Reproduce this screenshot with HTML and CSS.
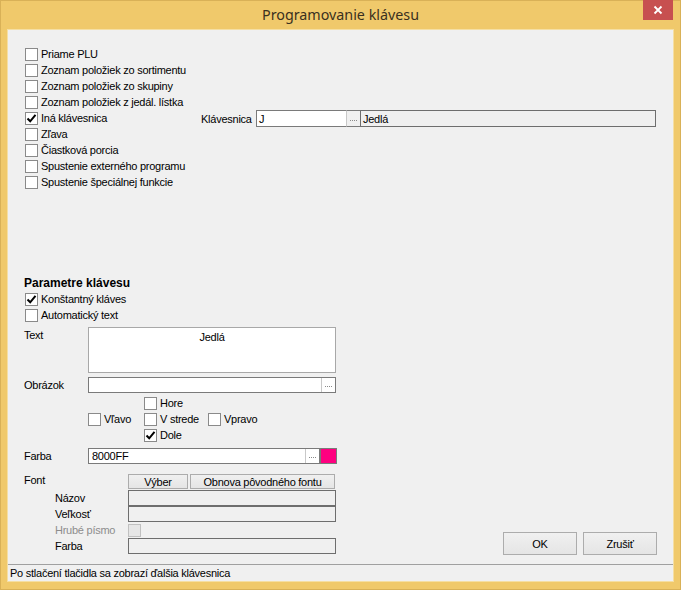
FILE: index.html
```html
<!DOCTYPE html>
<html lang="sk">
<head>
<meta charset="utf-8">
<title>Programovanie klávesu</title>
<link rel="stylesheet" href="styles.css">
</head>
<body>
<div class="window">
  <div class="titlebar">
    <span class="title">Programovanie klávesu</span>
    <span class="close"><svg width="10" height="10" viewBox="0 0 10 10"><path d="M1.5 1.5 L8.5 8.5 M8.5 1.5 L1.5 8.5" stroke="#fff" stroke-width="1.8"/></svg></span>
  </div>
  <div class="client">
    <div class="main">
      <div class="top">
        <div class="checklist">
          <div class="cbrow"><span class="cb"></span>Priame PLU</div>
          <div class="cbrow"><span class="cb"></span>Zoznam položiek zo sortimentu</div>
          <div class="cbrow"><span class="cb"></span>Zoznam položiek zo skupiny</div>
          <div class="cbrow"><span class="cb"></span>Zoznam položiek z jedál. lístka</div>
          <div class="cbrow"><span class="cb checked"><svg viewBox="0 0 11 11" width="11" height="11"><path d="M1.5 5.5 L4.2 8.3 L9.5 1.8" fill="none" stroke="#000" stroke-width="2"/></svg></span>Iná klávesnica</div>
          <div class="cbrow"><span class="cb"></span>Zľava</div>
          <div class="cbrow"><span class="cb"></span>Čiastková porcia</div>
          <div class="cbrow"><span class="cb"></span>Spustenie externého programu</div>
          <div class="cbrow"><span class="cb"></span>Spustenie špeciálnej funkcie</div>
        </div>
        <div class="kbdrow">
          <span class="kbdlabel">Klávesnica</span>
          <span class="field white kbdcode">J</span>
          <span class="dots"><i></i></span>
          <span class="field gray kbdname">Jedlá</span>
        </div>
      </div>
      <div class="lower">
        <div class="params">
          <div class="heading">Parametre klávesu</div>
          <div class="cbrow"><span class="cb checked"><svg viewBox="0 0 11 11" width="11" height="11"><path d="M1.5 5.5 L4.2 8.3 L9.5 1.8" fill="none" stroke="#000" stroke-width="2"/></svg></span>Konštantný kláves</div>
          <div class="cbrow"><span class="cb"></span>Automatický text</div>
          <div class="frow textrow">
            <span class="flabel">Text</span>
            <div class="textarea">Jedlá</div>
          </div>
          <div class="frow picrow">
            <span class="flabel">Obrázok</span>
            <div class="field white picfield"><span class="dots inner"><i></i></span></div>
          </div>
          <div class="align">
            <div class="cbrow c2"><span class="cb"></span>Hore</div>
            <div class="cbrow c1 r2"><span class="cb"></span>Vľavo</div>
            <div class="cbrow c2 r2"><span class="cb"></span>V strede</div>
            <div class="cbrow c3 r2"><span class="cb"></span>Vpravo</div>
            <div class="cbrow c2 r3"><span class="cb checked"><svg viewBox="0 0 11 11" width="11" height="11"><path d="M1.5 5.5 L4.2 8.3 L9.5 1.8" fill="none" stroke="#000" stroke-width="2"/></svg></span>Dole</div>
          </div>
          <div class="frow colorrow">
            <span class="flabel">Farba</span>
            <div class="field white colorfield">8000FF<span class="dots inner"><i></i></span></div>
            <span class="swatch"></span>
          </div>
          <div class="font">
            <div class="fontbtns">
              <span class="flabel">Font</span>
              <span class="btn small vyber">Výber</span>
              <span class="btn small obnova">Obnova pôvodného fontu</span>
            </div>
            <div class="fontrow first"><span class="sublabel">Názov</span><span class="field gray ffield"></span></div>
            <div class="fontrow"><span class="sublabel">Veľkosť</span><span class="field gray ffield"></span></div>
            <div class="fontrow"><span class="sublabel disabled">Hrubé písmo</span><span class="cb dis"></span></div>
            <div class="fontrow"><span class="sublabel">Farba</span><span class="field gray ffield"></span></div>
          </div>
        </div>
        <div class="actions">
          <span class="btn big">OK</span>
          <span class="btn big">Zrušiť</span>
        </div>
      </div>
    </div>
    <div class="status">Po stlačení tlačidla sa zobrazí ďalšia klávesnica</div>
  </div>
</div>
</body>
</html>
```

FILE: styles.css
```css
html, body {
  margin: 0;
  padding: 0;
}
body {
  width: 681px;
  height: 590px;
  overflow: hidden;
  font-family: "Liberation Sans", Arial, sans-serif;
  font-size: 11px;
  letter-spacing: -0.25px;
  color: #000;
}
.window {
  box-sizing: border-box;
  width: 681px;
  height: 590px;
  background: #f0c96b;
  border: 1px solid #d9b157;
  display: flex;
  flex-direction: column;
}
.titlebar {
  height: 29px;
  position: relative;
  display: flex;
  align-items: center;
  justify-content: center;
}
.title {
  font-family: "Noto Sans", "Open Sans", sans-serif;
  font-size: 14.3px;
  letter-spacing: 0;
  color: #3a3020;
  margin-bottom: 2px;
}
.close {
  position: absolute;
  top: -1px;
  right: 7px;
  width: 30px;
  height: 20px;
  background: #c75050;
  display: flex;
  align-items: center;
  justify-content: center;
}
.client {
  margin: 0 7px 0 7px;
  height: 551px;
  background: #f0f0f0;
  display: flex;
  flex-direction: column;
  box-shadow: 0 0 0 1px #f5dfa4;
}
.main {
  flex: 1;
  padding: 16px 16px 9px 16px;
  display: flex;
  flex-direction: column;
  justify-content: space-between;
}
.cbrow {
  height: 16px;
  display: flex;
  align-items: center;
  white-space: nowrap;
}
.cb {
  box-sizing: border-box;
  width: 13px;
  height: 13px;
  margin: 0 3px 0 1px;
  border: 1px solid #8a8a8a;
  background: #fff;
  display: inline-flex;
  align-items: center;
  justify-content: center;
  flex: none;
}
.cb svg { display: block; }
.top {
  display: flex;
}
.checklist {
  width: 177px;
}
.kbdrow {
  margin-top: 64px;
  height: 17px;
  display: flex;
  align-items: stretch;
}
.kbdlabel {
  width: 55px;
  display: flex;
  align-items: center;
}
.field {
  box-sizing: border-box;
  border: 1px solid #7a7a7a;
  display: flex;
  align-items: center;
  padding-left: 2px;
  position: relative;
}
.field.white { background: #fff; }
.field.gray { background: #f0f0f0; border-color: #6e6e6e; }
.kbdcode { width: 91px; border-right: 1px solid #c8c8c8; }
.dots {
  box-sizing: border-box;
  width: 13px;
  display: flex;
  align-items: center;
  justify-content: center;
  background: #f0f0f0;
  border-top: 1px solid #7a7a7a;
  border-bottom: 1px solid #7a7a7a;
}
.dots i {
  display: block;
  width: 7px;
  height: 0;
  border-bottom: 1px dotted #8a8a8a;
  margin-top: 3px;
}
.kbdname { width: 296px; border-left: 1px solid #7a7a7a; }
.lower {
  display: flex;
  justify-content: space-between;
  align-items: flex-end;
}
.params {
  width: 321px;
  margin-bottom: 1px;
}
.heading {
  font-weight: bold;
  font-size: 12px;
  letter-spacing: 0;
  height: 17px;
  display: flex;
  align-items: center;
}
.frow {
  display: flex;
}
.flabel {
  width: 64px;
  flex: none;
}
.textrow { margin-top: 4px; height: 46px; }
.textrow .flabel { padding-top: 2px; }
.textarea {
  box-sizing: border-box;
  width: 248px;
  height: 46px;
  background: #fff;
  border: 1px solid #a8a8a8;
  text-align: center;
  padding-top: 3px;
}
.picrow { margin-top: 4px; height: 16px; align-items: center; }
.picfield { width: 248px; height: 16px; }
.dots.inner {
  position: absolute;
  right: 0;
  top: 0;
  bottom: 0;
  border: none;
  border-left: 1px solid #c8c8c8;
  background: #fff;
  width: 14px;
}
.align {
  margin-top: 2px;
  margin-left: 63px;
  display: grid;
  grid-template-columns: 56px 64px auto;
  grid-template-rows: 16px 16px 16px;
}
.align .c1 { grid-column: 1; }
.align .c2 { grid-column: 2; }
.align .c3 { grid-column: 3; }
.align .r2 { grid-row: 2; }
.align .r3 { grid-row: 3; }
.colorrow { margin-top: 5px; height: 16px; align-items: center; }
.colorfield { width: 232px; height: 16px; padding-left: 3px; }
.swatch {
  box-sizing: border-box;
  width: 17px;
  height: 16px;
  background: #ff0080;
  border: 1px solid #7a7a7a;
}
.font { margin-top: 10px; }
.fontbtns {
  display: flex;
  height: 15px;
}
.fontbtns .flabel { width: 104px; }
.btn {
  box-sizing: border-box;
  display: flex;
  align-items: center;
  justify-content: center;
  border: 1px solid #acacac;
  background: linear-gradient(#f0f0f0, #e5e5e5);
  color: #000;
}
.vyber { width: 60px; margin-right: 2px; }
.obnova { width: 145px; }
.fontrow {
  display: flex;
  align-items: center;
  height: 16px;
}
.fontrow.first { margin-top: 1px; }
.sublabel {
  width: 73px;
  margin-left: 31px;
  flex: none;
}
.sublabel.disabled { color: #8d8d8d; }
.ffield { width: 208px; height: 16px; }
.cb.dis {
  background: #e6e6e6;
  border-color: #c0c0c0;
  margin-left: 0;
}
.actions {
  display: flex;
  gap: 6px;
}
.btn.big {
  width: 74px;
  height: 23px;
  font-size: 11px;
}
.status {
  height: 16px;
  border-top: 1px solid #a0a0a0;
  padding-left: 2px;
  display: flex;
  align-items: center;
  font-size: 11px;
}
```
